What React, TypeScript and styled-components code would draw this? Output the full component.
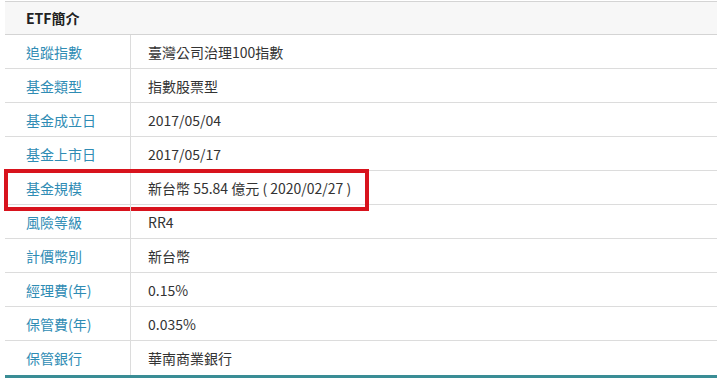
import * as React from 'react'
import styled, { createGlobalStyle } from 'styled-components'

const rows = [
  { label: '追蹤指數', value: '臺灣公司治理100指數' },
  { label: '基金類型', value: '指數股票型' },
  { label: '基金成立日', value: '2017/05/04' },
  { label: '基金上市日', value: '2017/05/17' },
  { label: '基金規模', value: '新台幣 55.84 億元 ( 2020/02/27 )', marked: true },
  { label: '風險等級', value: 'RR4' },
  { label: '計價幣別', value: '新台幣' },
  { label: '經理費(年)', value: '0.15%' },
  { label: '保管費(年)', value: '0.035%' },
  { label: '保管銀行', value: '華南商業銀行' },
]

export default function App() {
  return (
    <>
      <GlobalStyle />
      <Wrapper>
        <Header>ETF簡介</Header>
        {rows.map((row, i) => (
          <Row key={row.label} last={i === rows.length - 1}>
            <Label>{row.label}</Label>
            <Value>{row.value}</Value>
            {row.marked && <Highlight />}
          </Row>
        ))}
      </Wrapper>
    </>
  )
}

const GlobalStyle = createGlobalStyle`
  body {
    margin: 0;
    background: #fff;
    font-family: "Noto Sans CJK TC", "Noto Sans", sans-serif;
  }
`

const Wrapper = styled.div`
  width: 712px;
  margin: 0 0 0 5px;
  padding-top: 1px;
`

const Header = styled.div`
  height: 32px;
  border-top: 1px solid #d4d4d4;
  border-bottom: 1px solid #d4d4d4;
  background: #f7f7f7;
  display: flex;
  align-items: center;
  padding-left: 21px;
  font-size: 14px;
  font-weight: bold;
  color: #222;
`

const Row = styled.div<{ last?: boolean }>`
  position: relative;
  display: flex;
  height: ${p => (p.last ? '34px' : '33px')};
  border-bottom: ${p => (p.last ? '3px solid #3a8d95' : '1px solid #dcdcdc')};
`

const Label = styled.div`
  width: 104px;
  padding-left: 21px;
  border-right: 1px solid #dcdcdc;
  display: flex;
  align-items: center;
  font-size: 14px;
  color: #2f8cb4;
`

const Value = styled.div`
  padding-left: 17px;
  display: flex;
  align-items: center;
  font-size: 14px;
  color: #333;
`

const Highlight = styled.div`
  position: absolute;
  left: -1px;
  top: -2px;
  width: 357px;
  height: 34px;
  border: 4px solid #d8131d;
`
